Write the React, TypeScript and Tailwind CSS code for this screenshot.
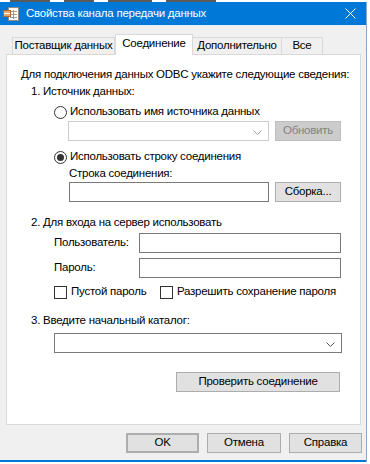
import React from 'react';

const font = { fontFamily: '"Liberation Sans", Arial, sans-serif' };

function Radio({ checked }: { checked?: boolean }) {
  return (
    <span className="flex h-[13px] w-[13px] shrink-0 items-center justify-center rounded-full border border-[#333333] bg-white">
      {checked && <span className="h-[7px] w-[7px] rounded-full bg-[#333333]" />}
    </span>
  );
}

function Check() {
  return <span className="h-[13px] w-[13px] shrink-0 border border-[#333333] bg-white" />;
}

function Chevron({ color }: { color: string }) {
  return (
    <svg width="9" height="5" viewBox="0 0 9 5" className="absolute right-[6px] top-[8px]">
      <path d="M0.5 0.5 L4.5 4.5 L8.5 0.5" fill="none" stroke={color} strokeWidth="1" />
    </svg>
  );
}

function Button({ children, className = '' }: { children: React.ReactNode; className?: string }) {
  return (
    <div className={`flex h-[20px] items-center justify-center whitespace-nowrap border border-[#adadad] bg-[#e1e1e1] text-black ${className}`}>
      {children}
    </div>
  );
}

function TitleIcon() {
  return (
    <svg width="16" height="16" viewBox="0 0 16 16" className="shrink-0">
      <rect x="5.5" y="1.5" width="10" height="13" fill="#ffffff" stroke="#8a8a8a" />
      <line x1="7" y1="5.5" x2="14" y2="5.5" stroke="#9a9a9a" />
      <line x1="7" y1="8.5" x2="14" y2="8.5" stroke="#9a9a9a" />
      <line x1="7" y1="11.5" x2="14" y2="11.5" stroke="#9a9a9a" />
      <line x1="10.5" y1="4" x2="10.5" y2="13" stroke="#9a9a9a" />
      <rect x="0.5" y="4.5" width="7" height="6" fill="#e8a36a" stroke="#b56a2e" />
      <line x1="1" y1="7.5" x2="7" y2="7.5" stroke="#ffffff" />
    </svg>
  );
}

export default function App() {
  return (
    <div
      className="flex h-[464px] w-[370px] flex-col overflow-hidden whitespace-nowrap bg-white text-[11.5px] tracking-[-0.25px]"
      style={font}
    >
      {/* strip of the window behind */}
      <div className="flex h-[2px] shrink-0 gap-[14px] pl-[10px]">
        <span className="h-[2px] w-[40px] bg-[#5a5a5a]" />
        <span className="h-[2px] w-[30px] bg-[#5a5a5a]" />
        <span className="h-[2px] w-[44px] bg-[#5a5a5a]" />
        <span className="h-[2px] w-[50px] bg-[#5a5a5a]" />
      </div>

      <div className="flex w-[367px] flex-1 flex-col border-r border-[#8aa6c8] bg-[#f0f0f0]">
        {/* title bar */}
        <div className="flex h-[23px] shrink-0 items-center bg-[#0078d7] pl-[3px] pr-[10px]">
          <TitleIcon />
          <span className="ml-[7px] flex-1 text-white">Свойства канала передачи данных</span>
          <svg width="11" height="11" viewBox="0 0 11 11">
            <path d="M0.5 0.5 L10.5 10.5 M10.5 0.5 L0.5 10.5" stroke="#ffffff" strokeWidth="1" />
          </svg>
        </div>

        {/* tabs */}
        <div className="mt-[9px] flex h-[20px] items-end pl-[12px] text-black">
          <div className="flex h-[17px] w-[103px] items-center justify-center border border-b-0 border-[#d9d9d9] bg-[#f0f0f0]">
            Поставщик данных
          </div>
          <div className="relative z-10 -mb-px flex h-[21px] w-[78px] items-center justify-center border border-b-0 border-[#d9d9d9] bg-white pb-[2px]">
            Соединение
          </div>
          <div className="flex h-[17px] w-[89px] items-center justify-center border border-b-0 border-l-0 border-[#d9d9d9] bg-[#f0f0f0]">
            Дополнительно
          </div>
          <div className="flex h-[17px] w-[41px] items-center justify-center border border-b-0 border-l-0 border-[#d9d9d9] bg-[#f0f0f0]">
            Все
          </div>
        </div>

        {/* panel */}
        <div className="ml-[6px] flex h-[371px] w-[355px] flex-col border border-[#d9d9d9] bg-white pt-[12px] text-black">
          <div className="flex h-[16px] items-center pl-[14px]">
            Для подключения данных ODBC укажите следующие сведения:
          </div>
          <div className="mt-[1px] flex h-[16px] items-center pl-[24px]">1. Источник данных:</div>

          <div className="mt-[4px] flex h-[16px] items-center gap-[3px] pl-[47px]">
            <Radio />
            <span>Использовать имя источника данных</span>
          </div>
          <div className="mt-[1px] flex h-[20px] gap-[6px] pl-[61px]">
            <div className="relative h-[20px] w-[201px] border border-[#cccccc] bg-white">
              <Chevron color="#a6a6a6" />
            </div>
            <div className="flex h-[20px] w-[66px] items-center justify-center border border-[#bfbfbf] bg-[#cccccc] text-[#838383]">
              Обновить
            </div>
          </div>

          <div className="mt-[8px] flex h-[16px] items-center gap-[3px] pl-[47px]">
            <Radio checked />
            <span>Использовать строку соединения</span>
          </div>
          <div className="mt-[1px] flex h-[16px] items-center pl-[62px]">Строка соединения:</div>
          <div className="flex h-[20px] gap-[6px] pl-[62px]">
            <div className="h-[20px] w-[200px] border border-[#7a7a7a] bg-white" />
            <Button className="w-[66px]">Сборка...</Button>
          </div>

          <div className="mt-[13px] flex h-[16px] items-center pl-[24px]">2. Для входа на сервер использовать</div>
          <div className="mt-[2px] flex h-[20px] items-center pl-[47px]">
            <span className="w-[85px]">Пользователь:</span>
            <div className="h-[20px] w-[202px] border border-[#7a7a7a] bg-white" />
          </div>
          <div className="mt-[5px] flex h-[20px] items-center pl-[47px]">
            <span className="w-[85px]">Пароль:</span>
            <div className="h-[20px] w-[202px] border border-[#7a7a7a] bg-white" />
          </div>
          <div className="mt-[6px] flex h-[16px] items-center pl-[47px]">
            <Check />
            <span className="ml-[4px] w-[89px]">Пустой пароль</span>
            <Check />
            <span className="ml-[4px]">Разрешить сохранение пароля</span>
          </div>

          <div className="mt-[13px] flex h-[16px] items-center pl-[24px]">3. Введите начальный каталог:</div>
          <div className="mt-[4px] flex pl-[47px]">
            <div className="relative h-[20px] w-[288px] border border-[#7a7a7a] bg-white">
              <Chevron color="#555555" />
            </div>
          </div>

          <div className="mt-[19px] flex pl-[169px]">
            <Button className="w-[164px]">Проверить соединение</Button>
          </div>
        </div>

        {/* footer buttons */}
        <div className="mt-[8px] flex gap-[8px] pl-[126px]">
          <Button className="w-[73px] border-2 border-[#0078d7]">OK</Button>
          <Button className="w-[74px]">Отмена</Button>
          <Button className="w-[73px]">Справка</Button>
        </div>
        <div className="flex-1" />
        <div className="h-[2px] bg-[#0078d7]" />
      </div>
      <div className="h-[2px] shrink-0 bg-white" />
    </div>
  );
}
